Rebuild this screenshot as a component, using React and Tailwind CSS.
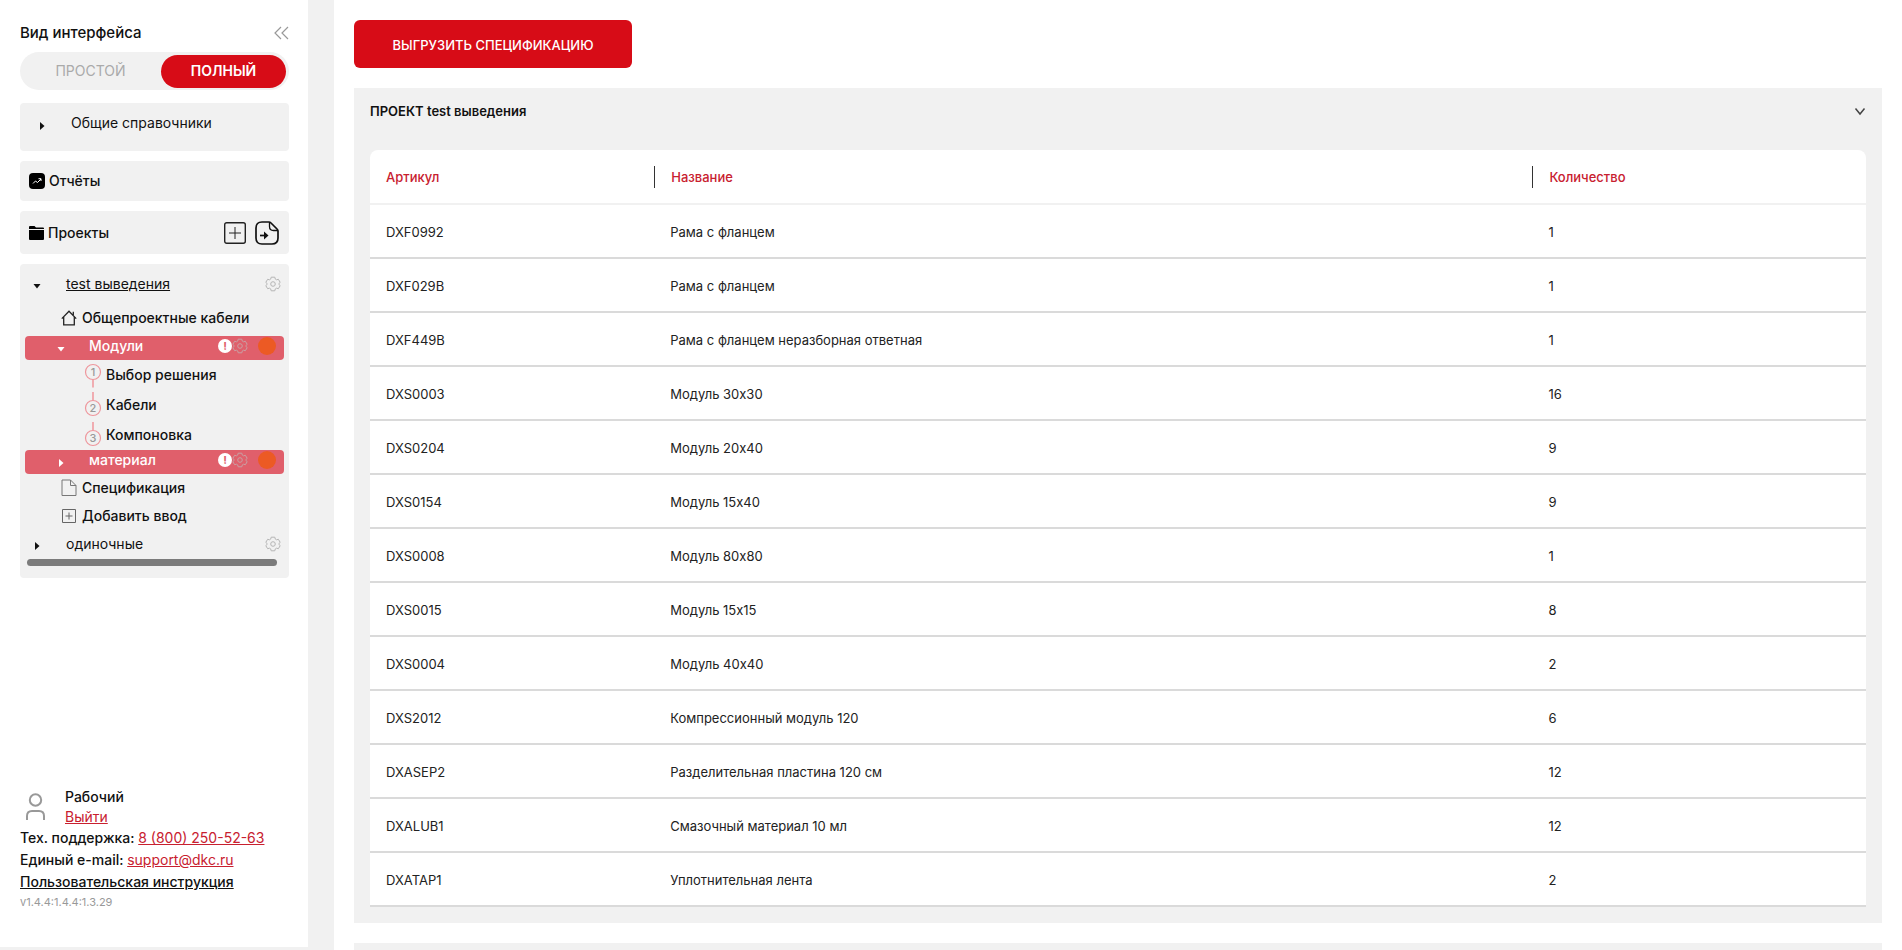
import React from "react";

const rows = [
  ["DXF0992", "Рама с фланцем", 1],
  ["DXF029B", "Рама с фланцем", 1],
  ["DXF449B", "Рама с фланцем неразборная ответная", 1],
  ["DXS0003", "Модуль 30x30", 16],
  ["DXS0204", "Модуль 20x40", 9],
  ["DXS0154", "Модуль 15x40", 9],
  ["DXS0008", "Модуль 80x80", 1],
  ["DXS0015", "Модуль 15x15", 8],
  ["DXS0004", "Модуль 40x40", 2],
  ["DXS2012", "Компрессионный модуль 120", 6],
  ["DXASEP2", "Разделительная пластина 120 см", 12],
  ["DXALUB1", "Смазочный материал 10 мл", 12],
  ["DXATAP1", "Уплотнительная лента", 2],
];

function Caret({ open, className = "" }) {
  return (
    <svg viewBox="0 0 8 8" className={`size-2 shrink-0 ${className}`} fill="currentColor" aria-hidden="true">
      {open ? <path d="M.5 2h7L4 6.500z" /> : <path d="M2 0v8l4.500-4z" />}
    </svg>
  );
}

function Gear({ className = "" }) {
  return (
    <svg viewBox="0 0 16 16" className={`size-4 shrink-0 ${className}`} fill="none" stroke="currentColor" aria-hidden="true">
      <path
        strokeLinejoin="round"
        d="M6.2 1.2h3.6l.5 1.9 1.2.7 1.9-.5 1.8 3.1L13.8 7.700v.6l1.400 1.300-1.800 3.100-1.900-.5-1.200.7-.5 1.900H6.200l-.5-1.900-1.200-.7-1.900.5L.8 9.600l1.400-1.300v-.6L.8 6.400l1.800-3.100 1.900.5 1.200-.7z"
      />
      <circle cx="8" cy="8" r="2.300" />
    </svg>
  );
}

function Home() {
  return (
    <svg viewBox="0 0 16 16" className="size-4 shrink-0" fill="none" stroke="#222" strokeWidth="1.300" aria-hidden="true">
      <path d="M.8 8.600 8 1.300l7.200 7.300M2.700 7v7.800h10.600V7M12.300 5V1.800" />
    </svg>
  );
}

function FileIcon() {
  return (
    <svg viewBox="0 0 16 18" className="h-[18px] w-4 shrink-0" fill="none" stroke="#777" aria-hidden="true">
      <path d="M1 1h8.500L15 6.500V16.500H1zM9.500 1v5.500H15" />
    </svg>
  );
}

function PlusBox() {
  return (
    <svg viewBox="0 0 16 16" className="size-4 shrink-0" fill="none" stroke="#666" aria-hidden="true">
      <path d="M1.500 1.500h13v13h-13zM8 4.500v7M4.500 8h7" />
    </svg>
  );
}

function StepIcon({ n }) {
  const first = n === 1;
  return (
    <svg viewBox="0 0 18 30" className="h-[30px] w-[18px] shrink-0" aria-hidden="true">
      <path d={first ? "M9 19.500v8" : "M9 2v8.500"} stroke="#f0a5aa" strokeWidth="1.800" />
      <circle cx="9" cy={first ? 12 : 18} r="7.500" fill="none" stroke="#ee979d" strokeWidth="1.200" />
      <text x="9" y={first ? 16 : 22} textAnchor="middle" fontSize="11" fill="#999">
        {n}
      </text>
    </svg>
  );
}

function ModuleBar({ label, open }) {
  return (
    <div className="mx-[5px] flex h-6 items-center rounded-[4px] bg-[#e05f6b] pb-1 text-white">
      <button type="button" aria-label={label} className="mt-[5px] ml-8 flex">
        <Caret open={open} />
      </button>
      <span className="ml-6 flex-1">{label}</span>
      <span className="flex size-[14px] items-center justify-center rounded-full bg-white text-[11px] leading-none font-bold text-[#e05f6b]">
        !
      </span>
      <button type="button" aria-label="Настройки" className="flex text-[#c9a0a4]">
        <Gear />
      </button>
      <span className="mr-2 ml-2.5 size-[18px] rounded-full bg-[#ec5a24]" />
    </div>
  );
}

function Sidebar() {
  return (
    <aside className="flex w-[308px] shrink-0 flex-col bg-white pt-[22px] pr-[19px] pb-9 pl-5 text-sm leading-[22px] font-medium text-[#111]">
      <div className="flex items-center justify-between">
        <h2 className="text-[15px]">Вид интерфейса</h2>
        <button type="button" aria-label="Свернуть" className="flex text-[#999]">
          <svg viewBox="0 0 16 14" className="h-[14px] w-4" fill="none" stroke="currentColor" strokeWidth="1.200" aria-hidden="true">
            <path d="M8 1 2 7l6 6M15 1 9 7l6 6" />
          </svg>
        </button>
      </div>

      <div className="mt-2 flex h-[38px] items-center rounded-full bg-[#f1f1f1] pr-[3px] font-normal">
        <button type="button" className="h-full flex-1 text-[#aaa]">ПРОСТОЙ</button>
        <button type="button" className="h-[33px] w-[125px] rounded-full bg-[#d70c17] font-semibold text-white">ПОЛНЫЙ</button>
      </div>

      <div className="mt-[13px] flex h-12 items-start rounded bg-[#f1f1f1] pt-[9px] pl-[18px] font-normal">
        <Caret className="mt-[10px]" />
        <span className="ml-[25px]">Общие справочники</span>
      </div>

      <div className="mt-[10px] flex h-10 items-center gap-1 rounded bg-[#f1f1f1] pl-[9px]">
        <svg viewBox="0 0 16 16" className="size-4" aria-hidden="true">
          <rect width="16" height="16" rx="4" fill="#000" />
          <path d="M4 10.500 6.500 8l2 1.500L12 6M9.500 5.700H12V8" fill="none" stroke="#fff" />
        </svg>
        <span>Отчёты</span>
      </div>

      <div className="mt-[10px] flex h-[43px] items-center rounded bg-[#f1f1f1] pr-[10px] pl-[9px]">
        <svg viewBox="0 0 15 14" className="h-[14px] w-[15px]" aria-hidden="true">
          <path d="M0 1q0-1 1-1h4.500l1.500 1.500H14q1 0 1 1V3H0zM0 4h15v9q0 1-1 1H1q-1 0-1-1z" fill="#000" />
        </svg>
        <span className="ml-1 flex-1">Проекты</span>
        <button type="button" aria-label="Добавить проект" className="flex">
          <svg viewBox="0 0 22 22" className="size-[22px]" fill="none" stroke="#222" aria-hidden="true">
            <rect x=".7" y=".7" width="20.600" height="20.600" rx="2" strokeWidth="1.400" />
            <path d="M11 5v12M5 11h12" />
          </svg>
        </button>
        <button type="button" aria-label="Импортировать проект" className="ml-[9px] flex">
          <svg viewBox="0 0 24 24" className="size-6" fill="none" stroke="#111" strokeWidth="1.700" aria-hidden="true">
            <path d="M7 1h7q1 0 2 1l6 6q1 1 1 2v7q0 6-6 6H7q-6 0-6-6V7q0-6 6-6z" />
            <path d="M14.500 1v4.500q0 4 4 4H23" strokeWidth="1.300" />
            <path d="M5 14.500h5" />
            <path d="m9 10.500 4.500 4-4.500 4z" fill="#111" stroke="none" />
          </svg>
        </button>
      </div>

      <div className="mt-[10px] flex flex-col rounded bg-[#f1f1f1] pb-3">
        <div className="flex h-10 items-center pr-2 pl-[13px] font-normal">
          <button type="button" aria-label="Свернуть проект" className="mt-1 flex">
            <Caret open />
          </button>
          <a href="#project" className="ml-[25px] flex-1 underline">test выведения</a>
          <button type="button" aria-label="Настройки проекта" className="flex text-[#b5b5b5]">
            <Gear />
          </button>
        </div>
        <div className="flex h-7 items-center gap-[5px] pl-[41px]">
          <Home />
          <span>Общепроектные кабели</span>
        </div>
        <div className="mt-1 flex flex-col">
          <ModuleBar label="Модули" open />
          <div className="flex h-[30px] items-center gap-1 pl-16"><StepIcon n={1} />Выбор решения</div>
          <div className="flex h-[30px] items-center gap-1 pl-16"><StepIcon n={2} />Кабели</div>
          <div className="flex h-[30px] items-center gap-1 pl-16"><StepIcon n={3} />Компоновка</div>
          <ModuleBar label="материал" />
        </div>
        <div className="flex h-7 items-center gap-[5px] pl-[41px]"><FileIcon />Спецификация</div>
        <div className="flex h-7 items-center gap-[5px] pl-[41px]"><PlusBox />Добавить ввод</div>
        <div className="flex h-7 items-center pr-2 pl-[13px] font-normal">
          <button type="button" aria-label="Развернуть проект" className="mt-1 flex">
            <Caret />
          </button>
          <span className="ml-[25px] flex-1">одиночные</span>
          <button type="button" aria-label="Настройки проекта" className="flex text-[#b5b5b5]">
            <Gear />
          </button>
        </div>
        <div className="mt-px mr-3 ml-[7px] h-[7px] rounded-full bg-[#7b7b7b]" />
      </div>

      <footer className="mt-auto flex flex-col">
        <div className="flex items-center pl-[6px] leading-5">
          <svg viewBox="0 0 19 28" className="mr-[20px] h-7 w-[19px]" fill="none" stroke="#999" strokeWidth="2" aria-hidden="true">
            <circle cx="9.500" cy="7" r="5.700" />
            <path d="M1 27v-4q0-5 5-5h7q5 0 5 5v4" />
          </svg>
          <div className="flex flex-col items-start">
            <span>Рабочий</span>
            <a href="#logout" className="font-normal text-[#c8202f] underline">Выйти</a>
          </div>
        </div>
        <p>
          Тех. поддержка: <a href="tel:88002505263" className="font-normal text-[#c8202f] underline">8 (800) 250-52-63</a>
        </p>
        <p>
          Единый e-mail: <a href="mailto:support@dkc.ru" className="font-normal text-[#c8202f] underline">support@dkc.ru</a>
        </p>
        <a href="#manual" className="underline">Пользовательская инструкция</a>
        <span className="text-[11px] leading-[18px] font-normal text-[#999]">v1.4.4:1.4.4:1.3.29</span>
      </footer>
    </aside>
  );
}

export default function App() {
  return (
    <div className="flex h-screen overflow-hidden bg-[#f1f1f1] font-['Inter','Liberation_Sans',sans-serif]">
      <div className="flex pb-[3px]">
        <Sidebar />
      </div>
      <main className="ml-[26px] flex min-w-0 flex-1 flex-col gap-5 overflow-hidden bg-white pt-5 pr-5 pl-5 text-[13px] leading-5 text-[#222]">
        <button type="button" className="h-12 w-[278px] shrink-0 rounded-md bg-[#d70c17] pt-0.5 font-medium text-white">
          ВЫГРУЗИТЬ СПЕЦИФИКАЦИЮ
        </button>
        <section className="shrink-0 bg-[#f1f1f1] px-4 pb-4">
          <div className="flex h-[62px] items-start justify-between pt-[13px]">
            <h1 className="font-semibold text-[#111]">ПРОЕКТ test выведения</h1>
            <button type="button" aria-label="Свернуть" className="mt-1.5 flex">
              <svg viewBox="0 0 12 10" className="h-[10px] w-3" fill="none" stroke="#444" strokeWidth="1.500" aria-hidden="true">
                <path d="m1.500 1.500 4.500 5.500L10.500 1.500" />
              </svg>
            </button>
          </div>
          <table className="w-full table-fixed border-separate border-spacing-0 rounded-t-lg bg-white text-left">
            <colgroup>
              <col className="w-[19%]" />
              <col className="w-[58.700%]" />
              <col />
            </colgroup>
            <thead className="text-[#c8202f]">
              <tr className="h-[55px]">
                <th className="border-b-2 border-[#f1f1f1] px-4 font-medium">Артикул</th>
                <th className="border-b-2 border-[#f1f1f1] p-0 font-medium">
                  <div className="flex h-[22px] items-center border-l border-[#333] pl-4">Название</div>
                </th>
                <th className="border-b-2 border-[#f1f1f1] p-0 font-medium">
                  <div className="flex h-[22px] items-center border-l border-[#333] pl-4">Количество</div>
                </th>
              </tr>
            </thead>
            <tbody>
              {rows.map(([code, name, count]) => (
                <tr key={code} className="h-[54px]">
                  <td className="border-b-2 border-[#dadada] px-4 pt-0.5">{code}</td>
                  <td className="border-b-2 border-[#dadada] px-4 pt-0.5">{name}</td>
                  <td className="border-b-2 border-[#dadada] px-4 pt-0.5">{count}</td>
                </tr>
              ))}
            </tbody>
          </table>
        </section>
        <section className="h-16 shrink-0 bg-[#f1f1f1]" />
      </main>
    </div>
  );
}
